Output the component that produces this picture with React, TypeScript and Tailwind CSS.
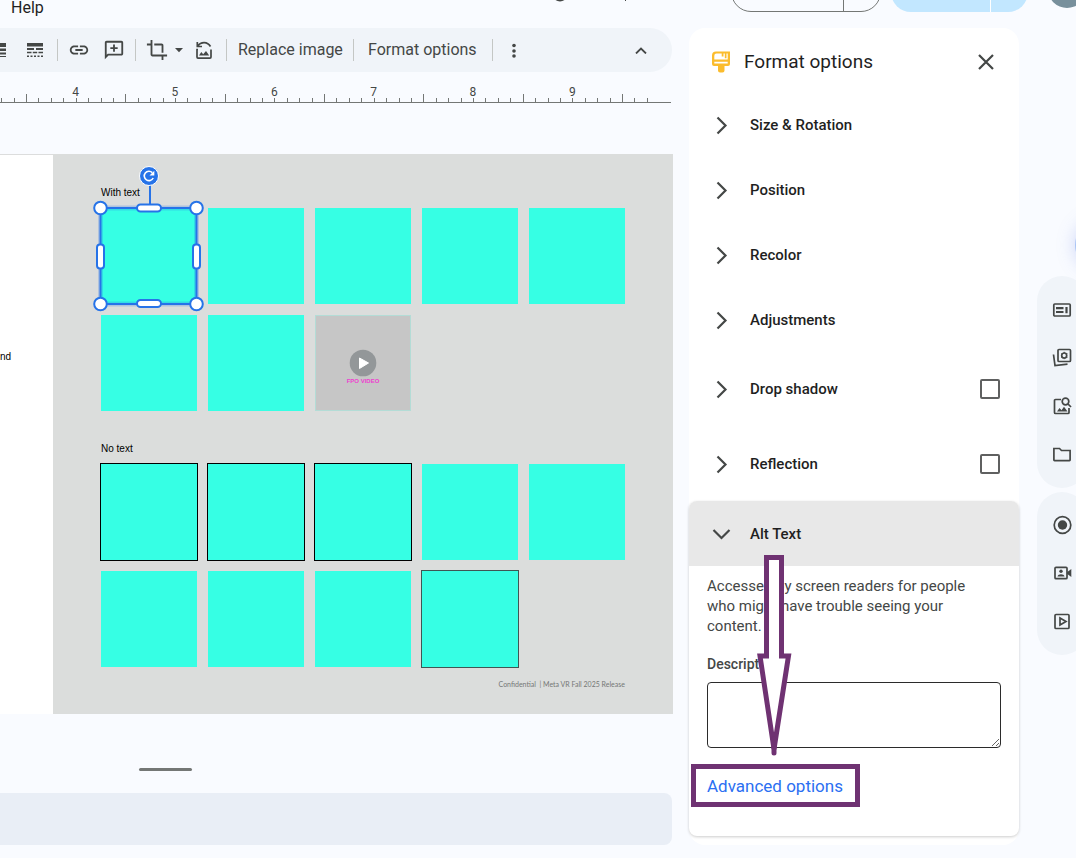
import type { ReactNode } from "react";

const MAJOR = 596 / 6;
const TICKS = Array.from({ length: 53 }, (_, i) => ({
  x: Math.round(26 + ((i - 2) * MAJOR) / 8),
  tall: (i - 2) % 8 === 0,
}));

function Icon({ size = 20, children }: { size?: number; children: ReactNode }) {
  return (
    <svg width={size} height={size} viewBox="0 0 24 24" fill="currentColor" aria-hidden="true" className="shrink-0">
      {children}
    </svg>
  );
}

function ToolButton({ label, className, children }: { label: string; className: string; children: ReactNode }) {
  return (
    <button type="button" aria-label={label} className={`flex h-7 shrink-0 items-center justify-center ${className}`}>
      {children}
    </button>
  );
}

function Divider({ className }: { className: string }) {
  return <span className={`h-[22px] w-px shrink-0 bg-[#c4c7c5] ${className}`} />;
}

function TopBar() {
  return (
    <header className="flex h-7 items-end">
      <button type="button" className="mb-3 ml-[11px] text-base leading-4 text-[#1f1f1f]">
        Help
      </button>
      <svg width="80" height="4" viewBox="0 0 80 4" className="mb-6 ml-auto shrink-0" aria-hidden="true">
        <circle cx="10" cy="-6" r="7.5" fill="#444746" />
        <path d="M75.500 0v1" stroke="#444746" />
      </svg>
      <div className="mb-4 ml-[101px] flex h-10 w-[150px] shrink-0 justify-end rounded-full border border-[#747775]">
        <span className="mr-[36px] w-px bg-[#747775]" />
      </div>
      <div className="mb-4 ml-[10px] flex h-10 w-[137px] shrink-0 justify-end rounded-full bg-[#c2e7ff]">
        <span className="mr-[37px] w-px bg-white" />
      </div>
      <div className="-mr-[10px] mb-5 ml-5 size-[38px] shrink-0 rounded-full bg-[#78909c]" />
    </header>
  );
}

function Toolbar() {
  return (
    <div className="mr-px flex h-11 items-center rounded-r-full bg-[#f0f4f9] pr-[17px] text-[#444746]">
      <svg width="6" height="16" viewBox="0 0 6 16" className="shrink-0" fill="#444746" aria-hidden="true">
        <path d="M0 1h6v4H0zM0 6.500h6v2.500H0zM0 10.500h6v2H0zM0 14h6v1H0z" />
      </svg>
      <ToolButton label="Border dash" className="ml-[15px] w-7">
        <svg width="16" height="16" viewBox="0 0 16 16" fill="currentColor" aria-hidden="true">
          <path d="M0 1h16v3.500H0zM0 6h7v2H0zM9 6h7v2H9zM0 9.700h4.500v1.600H0zM5.800 9.700h4.400v1.600H5.800zM11.500 9.700H16v1.600h-4.500zM0 13.500h2V15H0zM3.500 13.500h2V15h-2zM7 13.500h2V15H7zM10.500 13.500h2V15h-2zM14 13.500h2V15h-2z" />
        </svg>
      </ToolButton>
      <Divider className="ml-2" />
      <ToolButton label="Insert link" className="ml-[7px] w-7">
        <Icon size={22}>
          <path d="M3.900 12c0-1.710 1.390-3.100 3.100-3.100h4V7H7c-2.760 0-5 2.240-5 5s2.240 5 5 5h4v-1.900H7c-1.710 0-3.100-1.390-3.100-3.100zM8 13h8v-2H8v2zm9-6h-4v1.900h4c1.710 0 3.100 1.390 3.100 3.100s-1.390 3.100-3.100 3.100h-4V17h4c2.760 0 5-2.240 5-5s-2.240-5-5-5z" />
        </Icon>
      </ToolButton>
      <ToolButton label="Add comment" className="ml-[7px] w-7">
        <Icon size={22}>
          <path d="M20 2H4c-1.100 0-1.990.9-1.990 2L2 22l4-4h14c1.100 0 2-.9 2-2V4c0-1.100-.9-2-2-2zm0 14H5.170L4 17.170V4h16v12zM11 14h2v-3h3V9h-3V6h-2v3H8v2h3z" />
        </Icon>
      </ToolButton>
      <Divider className="ml-[7px]" />
      <ToolButton label="Crop image" className="ml-[7px] w-7">
        <Icon size={22}>
          <path d="M17 15h2V7c0-1.100-.9-2-2-2H9v2h8v8zM7 17V1H5v4H1v2h4v10c0 1.100.9 2 2 2h10v4h2v-4h4v-2H7z" />
        </Icon>
      </ToolButton>
      <ToolButton label="Mask image" className="ml-[3px] w-[10px]">
        <svg width="10" height="6" viewBox="0 0 10 6" fill="currentColor" aria-hidden="true">
          <path d="M1 1h8L5 5.200z" />
        </svg>
      </ToolButton>
      <ToolButton label="Reset image" className="ml-[6px] w-7">
        <svg width="18" height="20" viewBox="0 0 18 20" fill="none" stroke="currentColor" strokeWidth="1.700" aria-hidden="true">
          <path d="M3 9.500H2v7.600a1 1 0 0 0 1 1h12a1 1 0 0 0 1-1V9.500" />
          <path d="M2.500 6C6 1.300 12.500 1.300 15.500 6.500M7 6.500H2.300V2" />
          <path d="M4 15.500L6.300 12l1.900 2.300L11 11l3.200 4.500z" fill="currentColor" stroke="none" />
        </svg>
      </ToolButton>
      <Divider className="ml-2" />
      <button type="button" className="ml-[11px] w-[106px] shrink-0 whitespace-nowrap text-left text-base leading-5">
        Replace image
      </button>
      <Divider className="ml-[9px]" />
      <button type="button" className="ml-[14px] w-[110px] shrink-0 whitespace-nowrap text-left text-base leading-5">
        Format options
      </button>
      <Divider className="ml-[14px]" />
      <ToolButton label="More" className="ml-[7px] w-7">
        <svg width="4" height="16" viewBox="0 0 4 16" fill="currentColor" aria-hidden="true">
          <circle cx="2" cy="3.500" r="1.800" />
          <circle cx="2" cy="9" r="1.800" />
          <circle cx="2" cy="14" r="1.800" />
        </svg>
      </ToolButton>
      <ToolButton label="Hide the menus" className="ml-auto w-7">
        <svg width="12" height="8" viewBox="0 0 12 8" fill="none" stroke="currentColor" strokeWidth="1.800" aria-hidden="true">
          <path d="M1 7.500l5-5 5 5" />
        </svg>
      </ToolButton>
    </div>
  );
}

function Ruler() {
  return (
    <div className="mr-[2px] overflow-hidden pt-[13px] text-[#444746]">
      <div className="ml-[26px] grid w-[596px] grid-cols-6 text-center text-xs leading-[14px]">
        {[4, 5, 6, 7, 8, 9].map((n) => (
          <span key={n}>{n}</span>
        ))}
      </div>
      <svg className="-mt-[5px] block h-[9px] w-full" aria-hidden="true">
        {TICKS.map((t) => (
          <rect key={t.x} x={t.x} y={t.tall ? 0 : 4} width="1" height={t.tall ? 8 : 4} fill="#747775" />
        ))}
        <rect x="0" y="8" width="100%" height="1" fill="#747775" />
      </svg>
    </div>
  );
}

function Selection() {
  return (
    <svg
      className="absolute -left-2 -top-[44px] z-10"
      width="112"
      height="150"
      viewBox="0 0 112 150"
      fill="white"
      stroke="#2673e8"
      strokeWidth="2"
      aria-hidden="true"
    >
      <rect x="7.500" y="44" width="96" height="96" fill="none" strokeOpacity=".25" strokeWidth="5" />
      <path d="M57 20v24" />
      <rect x="7.500" y="44" width="96" height="96" fill="none" />
      <circle cx="7.500" cy="44" r="6.300" />
      <circle cx="103.500" cy="44" r="6.300" />
      <circle cx="7.500" cy="140" r="6.300" />
      <circle cx="103.500" cy="140" r="6.300" />
      <rect x="44" y="40.500" width="24" height="7" rx="3.500" />
      <rect x="44" y="136" width="24" height="7" rx="3.500" />
      <rect x="4" y="80.500" width="7" height="24" rx="3" />
      <rect x="100" y="80.500" width="7" height="24" rx="3" />
      <circle cx="56" cy="12" r="9.500" fill="#2673e8" stroke="white" strokeWidth="1" />
      <path d="M60.200 14A4.700 4.700 0 1 1 59.300 8.600" fill="none" stroke="white" strokeWidth="1.600" />
      <path d="M61.300 6.700v4.800h-4.800z" stroke="none" />
    </svg>
  );
}

type TileKind = "plain" | "selected" | "black" | "grey" | "video";

function Tile({ kind }: { kind: TileKind }) {
  if (kind === "video") {
    return (
      <div className="flex aspect-square flex-col items-center border border-[#b3dcd6] bg-[#c6c6c6] pt-[33px]">
        <svg width="28" height="28" viewBox="0 0 28 28" aria-hidden="true">
          <circle cx="14" cy="14" r="13.300" fill="#939799" />
          <path d="M10.500 9v10.500L19.500 14z" fill="white" stroke="white" strokeWidth="1" strokeLinejoin="round" />
        </svg>
        <span className="whitespace-nowrap text-[6px] font-extrabold leading-2 text-[#ee3fd0]">FPO VIDEO</span>
      </div>
    );
  }
  if (kind === "selected") {
    return (
      <div className="relative aspect-square bg-[#36ffe4]">
        <Selection />
      </div>
    );
  }
  if (kind === "black") return <div className="aspect-square bg-[#36ffe4] ring-1 ring-black" />;
  if (kind === "grey") return <div className="aspect-square bg-[#36ffe4] ring-1 ring-[#3f5654]" />;
  return <div className="aspect-square bg-[#36ffe4]" />;
}

const WITH_TEXT: TileKind[] = ["selected", "plain", "plain", "plain", "plain", "plain", "plain", "video"];
const NO_TEXT: TileKind[] = ["black", "black", "black", "plain", "plain", "plain", "plain", "plain", "grey"];

function TileGrid({ tiles }: { tiles: TileKind[] }) {
  return (
    <div className="grid grid-cols-[repeat(5,96px)] gap-[11px]">
      {tiles.map((kind, i) => (
        <Tile key={i} kind={kind} />
      ))}
    </div>
  );
}

function Slide() {
  return (
    <div className="mt-[51px] flex">
      <div className="w-[53px] shrink-0 border-t border-[#dcdddd] bg-white pt-[196px] font-['Liberation_Sans',Arial,sans-serif] text-[10px] leading-3 text-black">
        nd
      </div>
      <div className="flex-1 bg-[#dbdddc] pb-[25px] pl-12 pt-[33px] font-['Liberation_Sans',Arial,sans-serif]">
        <p className="mb-[9px] text-[10px] leading-3 text-black">With text</p>
        <TileGrid tiles={WITH_TEXT} />
        <p className="mb-[9px] mt-8 text-[10px] leading-3 text-black">No text</p>
        <TileGrid tiles={NO_TEXT} />
        <p className="mr-12 mt-3 text-right font-[Lato,sans-serif] text-[7px] leading-[10px] text-[#757776]">
          Confidential &nbsp;| Meta VR Fall 2025 Release
        </p>
      </div>
    </div>
  );
}

function Chevron({ open = false }: { open?: boolean }) {
  return (
    <svg width="24" height="24" viewBox="0 0 24 24" fill="none" stroke="#444746" strokeWidth="2.200" className="shrink-0" aria-hidden="true">
      <path d={open ? "M3.500 8l8 8 8-8" : "M7.500 4.500l8 8-8 8"} />
    </svg>
  );
}

function Section({ title, className, toggle = false }: { title: string; className: string; toggle?: boolean }) {
  return (
    <div className={`flex items-center pl-[21px] pr-[19px] ${className}`}>
      <button type="button" aria-expanded="false" className="flex flex-1 items-center gap-4 text-[15px] font-medium leading-5 text-[#1f1f1f]">
        <Chevron />
        {title}
      </button>
      {toggle && (
        <input
          type="checkbox"
          aria-label={title}
          className="size-5 appearance-none rounded-[2px] border-2 border-[#5f6060] bg-white"
        />
      )}
    </div>
  );
}

function FormatPanel() {
  return (
    <aside className="ml-4 w-[330px] shrink-0 self-start rounded-2xl bg-white pb-[9px]">
      <div className="flex h-16 items-center pl-[23px] pr-[21px] pt-1">
        <svg width="18" height="22" viewBox="0 0 18 22" aria-hidden="true" className="shrink-0">
          <path
            fillRule="evenodd"
            d="M4 .500h14V13a2 2 0 0 1-2 2h-3.500v4.500a2 2 0 0 1-2 2h-2.500a2 2 0 0 1-2-2V15H2a2 2 0 0 1-2-2V4.500a4 4 0 0 1 4-4zM4.500 2.600a2.200 2.200 0 0 0-2.200 2.200V8.500h13.400V2.600h-1.200v4.600h-1.700V2.600h-1.300v2.800H9.700V2.600zM2.300 10.700v1.900h13.400v-1.900z"
            fill="#fbbc2d"
          />
        </svg>
        <h2 className="ml-[14px] flex-1 text-[19px] leading-6 text-[#1f1f1f]">Format options</h2>
        <button type="button" aria-label="Close" className="text-[#444746]">
          <svg width="24" height="24" viewBox="0 0 24 24" fill="none" stroke="currentColor" strokeWidth="2.200" aria-hidden="true">
            <path d="M5 5l14 14M19 5L5 19" />
          </svg>
        </button>
      </div>
      <Section title="Size & Rotation" className="h-[65px]" />
      <Section title="Position" className="h-[65px]" />
      <Section title="Recolor" className="h-[65px]" />
      <Section title="Adjustments" className="h-[65px]" />
      <Section title="Drop shadow" className="h-[74px]" toggle />
      <Section title="Reflection" className="h-[75px]" toggle />
      <section className="relative rounded-lg bg-white pb-[29px] shadow-[0_1px_3px_rgba(0,0,0,0.2)]">
        <button
          type="button"
          aria-expanded="true"
          className="flex h-[65px] w-full items-center gap-4 rounded-t-lg bg-[#e8e8e8] pl-[21px] text-[15px] font-medium leading-5 text-[#1f1f1f]"
        >
          <Chevron open />
          Alt Text
        </button>
        <div className="px-[18px] pt-[10px] text-[#444746]">
          <p className="pr-6 text-[15px] leading-5">
            Accessed by screen readers for people who might have trouble seeing your content.
          </p>
          <label htmlFor="alt-description" className="mt-[18px] block text-sm font-medium leading-5">
            Description
          </label>
          <textarea
            id="alt-description"
            className="mt-2 block h-[66px] w-full resize-y rounded border border-[#2b2b2b] bg-white"
          />
        </div>
        <a
          href="#advanced"
          className="ml-[2px] mt-4 flex h-[43px] w-[169px] items-center whitespace-nowrap border-5 border-[#6f3272] pl-[11px] text-[17px] leading-5 text-[#2b6ff2]"
        >
          Advanced options
        </a>
        <svg
          className="pointer-events-none absolute left-[67px] top-[53px]"
          width="36"
          height="203"
          viewBox="0 0 36 203"
          fill="white"
          stroke="#6f3272"
          strokeWidth="5"
          aria-hidden="true"
        >
          <path d="M10.500 3.500h15v98.500h7L18 195 4 102h6.500z" />
          <path d="M18 185v14" strokeLinecap="round" />
        </svg>
      </section>
    </aside>
  );
}

function RailButton({ label, children }: { label: string; children: ReactNode }) {
  return (
    <button type="button" aria-label={label} className="flex size-6 items-center justify-center">
      <svg width="20" height="20" viewBox="0 0 20 20" fill="none" stroke="currentColor" strokeWidth="1.700" aria-hidden="true">
        {children}
      </svg>
    </button>
  );
}

function SideRail() {
  return (
    <nav className="relative ml-[18px] w-[39px] shrink-0 overflow-hidden pt-[248px] text-[#444746]">
      <span className="absolute -right-[49px] top-[192px] size-[50px] rounded-full bg-[#a9c4f5] shadow-[0_0_18px_rgba(120,140,230,0.35)]" />
      <div className="relative flex h-[212px] w-[50px] flex-col items-center gap-6 rounded-full bg-[#f0f4f9] pt-[22px]">
        <RailButton label="Templates">
          <rect x="1.800" y="4" width="16.400" height="12" rx="1" />
          <path d="M4 8.200h7.500M4 12h7.500M14.500 7v6.300" strokeWidth="2.200" />
        </RailButton>
        <RailButton label="Building blocks">
          <rect x="6" y="1.500" width="12.500" height="12" rx="1" />
          <circle cx="12.200" cy="7.500" r="2.500" />
          <path d="M12.200 3.800v7.400M9 5.600l6.400 3.800M9 9.400l6.400-3.800" strokeWidth="1" strokeDasharray="1.300 4.800" />
          <path d="M1.500 6.500L3 17.500l12.500-1.300" />
        </RailButton>
        <RailButton label="Image search">
          <path d="M9 3.500H3.500a1 1 0 0 0-1 1v12a1 1 0 0 0 1 1h12.500a1 1 0 0 0 1-1V12" />
          <circle cx="13.500" cy="5.500" r="3.300" />
          <path d="M16 8l3 3" />
          <path d="M5 15.500L7.500 12l2 2.300 2.500-3.500 3.500 4.700z" fill="currentColor" stroke="none" />
        </RailButton>
        <RailButton label="Files">
          <path d="M1.900 15.500v-11h5.600l2 2h8.600v9.500a.600.600 0 0 1-.6.600H2.500a.600.600 0 0 1-.6-.600z" />
        </RailButton>
      </div>
      <div className="relative mt-1 flex h-[163px] w-[50px] flex-col items-center gap-6 rounded-full bg-[#f0f4f9] pt-[21px]">
        <RailButton label="Record">
          <circle cx="10.500" cy="10" r="8.300" />
          <circle cx="10.500" cy="10" r="4.700" fill="currentColor" stroke="none" />
        </RailButton>
        <RailButton label="Video presenter">
          <rect x="3" y="4.300" width="12" height="11.400" rx="1" />
          <path d="M19.300 6v8L15 10.700V9.300z" fill="currentColor" stroke="none" />
          <circle cx="9" cy="8.300" r="1.700" fill="currentColor" stroke="none" />
          <path d="M5.500 13.500c.5-3 6.500-3 7 0z" fill="currentColor" stroke="none" />
        </RailButton>
        <RailButton label="Play clip">
          <rect x="3" y="3.500" width="14" height="14" rx="1" />
          <path d="M8 7v7l6-3.500z" />
        </RailButton>
      </div>
    </nav>
  );
}

export default function App() {
  return (
    <div className="min-h-screen overflow-hidden bg-[#f9fbff] font-[Roboto,sans-serif]">
      <TopBar />
      <div className="flex">
        <main className="min-w-0 flex-1">
          <Toolbar />
          <Ruler />
          <Slide />
          <div className="ml-[139px] mt-[54px] h-[3px] w-[53px] rounded-full bg-[#747775]" />
          <div className="mr-px mt-[22px] h-[52px] rounded-r-lg bg-[#e9eef6]" />
        </main>
        <FormatPanel />
        <SideRail />
      </div>
    </div>
  );
}
